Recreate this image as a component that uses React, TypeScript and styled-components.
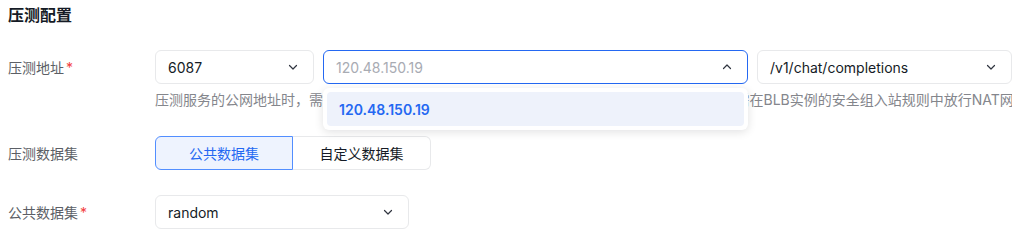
import styled, { createGlobalStyle } from "styled-components";

const GlobalStyle = createGlobalStyle`
  body {
    margin: 0;
    background: #fff;
    font-family: Inter, "Noto Sans CJK SC", sans-serif;
    color: #151b26;
  }
`;

const Chevron = ({ up }: { up?: boolean }) => (
  <svg width="12" height="12" viewBox="0 0 12 12" fill="none">
    <path
      d={up ? "M2.5 7.5 L6 4 L9.5 7.5" : "M2.5 4.5 L6 8 L9.5 4.5"}
      stroke="#303540"
      strokeWidth="1.2"
      strokeLinecap="round"
      strokeLinejoin="round"
    />
  </svg>
);

const App = () => {
  return (
    <Page>
      <GlobalStyle />
      <Title>压测配置</Title>

      <Form>
        <Row>
          <Label>
            压测地址<Star>*</Star>
          </Label>
          <Field>
            <Controls>
              <Select $width={159}>
                <Value>6087</Value>
                <Chevron />
              </Select>
              <SelectWrap>
                <Select $width={425} $focused>
                  <Value $placeholder>120.48.150.19</Value>
                  <Chevron up />
                </Select>
                {/* 下拉面板盖在说明文字上 */}
                <Menu>
                  <Option>120.48.150.19</Option>
                </Menu>
              </SelectWrap>
              <Select $width={255}>
                <Value>/v1/chat/completions</Value>
                <Chevron />
              </Select>
            </Controls>
            <Help>
              {"压测服务的公网地址时，需要确保压测集群能够访问该地址，如果目标服务使用了负载均衡， \u2009需在BLB实例的安全组入站规则中放行NAT网关关联的EIP地址"}
            </Help>
          </Field>
        </Row>

        <Row>
          <Label>压测数据集</Label>
          <Field>
            <RadioGroup>
              <RadioButton $active>公共数据集</RadioButton>
              <RadioButton>自定义数据集</RadioButton>
            </RadioGroup>
          </Field>
        </Row>

        <Row>
          <Label>
            公共数据集<Star>*</Star>
          </Label>
          <Field>
            <Select $width={254}>
              <Value>random</Value>
              <Chevron />
            </Select>
          </Field>
        </Row>
      </Form>
    </Page>
  );
};

export default App;

const Page = styled.div`
  width: 1020px;
  height: 243px;
  overflow: hidden;
  padding: 3px 8px 0;
  box-sizing: border-box;
`;

const Title = styled.h2`
  margin: 0 0 23px;
  font-size: 16px;
  line-height: 24px;
  font-weight: 700;
  color: #151b26;
`;

const Form = styled.div`
  display: flex;
  flex-direction: column;
  gap: 25px;
`;

const Row = styled.div`
  display: flex;
  align-items: flex-start;
`;

const Label = styled.div`
  width: 147px;
  flex-shrink: 0;
  height: 34px;
  display: flex;
  align-items: center;
  font-size: 14px;
  color: #5c5f66;
`;

const Star = styled.span`
  margin-left: 2px;
  color: #f33e3e;
`;

const Field = styled.div`
  flex: 1;
  min-width: 0;
`;

const Controls = styled.div`
  display: flex;
  gap: 9px;
`;

const SelectWrap = styled.div`
  position: relative;
`;

const Select = styled.div<{ $width: number; $focused?: boolean }>`
  width: ${(p) => p.$width}px;
  height: 34px;
  box-sizing: border-box;
  display: flex;
  align-items: center;
  justify-content: space-between;
  padding: 0 14px 0 12px;
  border: 1px solid ${(p) => (p.$focused ? "#2468f2" : "#e8e9eb")};
  border-radius: 6px;
  background: #fff;
`;

const Value = styled.span<{ $placeholder?: boolean }>`
  font-size: 14px;
  color: ${(p) => (p.$placeholder ? "#a8abb3" : "#151b26")};
`;

const Menu = styled.div`
  position: absolute;
  top: 38px;
  left: 0;
  width: 425px;
  box-sizing: border-box;
  padding: 4px;
  border-radius: 6px;
  background: #fff;
  box-shadow: 0 2px 10px rgba(7, 12, 20, 0.12);
  z-index: 2;
`;

const Option = styled.div`
  height: 34px;
  display: flex;
  align-items: center;
  padding: 0 12px;
  border-radius: 4px;
  background: #eef2fb;
  color: #2468f2;
  font-size: 14px;
  font-weight: 600;
`;

const Help = styled.div`
  margin-top: 5px;
  font-size: 14px;
  line-height: 22px;
  color: #84868c;
  white-space: nowrap;
  overflow: hidden;
`;

const RadioGroup = styled.div`
  display: flex;
`;

const RadioButton = styled.div<{ $active?: boolean }>`
  width: 138px;
  height: 34px;
  box-sizing: border-box;
  display: flex;
  align-items: center;
  justify-content: center;
  font-size: 14px;
  border: 1px solid ${(p) => (p.$active ? "#528eff" : "#e8e9eb")};
  background: ${(p) => (p.$active ? "#eef3fe" : "#fff")};
  color: ${(p) => (p.$active ? "#2468f2" : "#151b26")};

  &:first-child {
    border-radius: 6px 0 0 6px;
  }

  &:last-child {
    border-left: none;
    border-radius: 0 6px 6px 0;
  }
`;
